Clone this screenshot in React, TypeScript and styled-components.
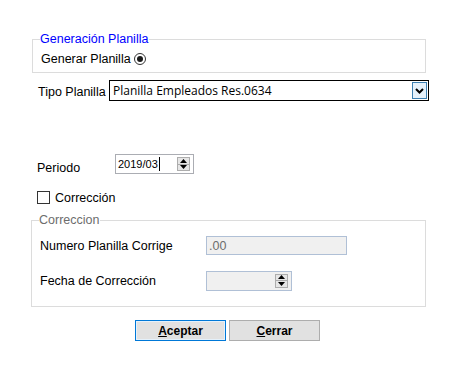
import { createGlobalStyle, styled } from "styled-components"

const GlobalStyle = createGlobalStyle`
    html, body {
        margin: 0;
        padding: 0;
        background: #ffffff;
    }
    * {
        box-sizing: border-box;
    }
`

const SpinButton = () => {
    return (
        <Spin>
            <SpinHalf>
                <svg width="7" height="4" viewBox="0 0 7 4">
                    <path d="M0 4 L3.5 0 L7 4 Z" fill="#000" />
                </svg>
            </SpinHalf>
            <SpinHalf>
                <svg width="7" height="4" viewBox="0 0 7 4">
                    <path d="M0 0 L3.5 4 L7 0 Z" fill="#000" />
                </svg>
            </SpinHalf>
        </Spin>
    )
}

const App = () => {
    return (
        <>
            <GlobalStyle />
            <Page>
                <GroupBox $left={32} $width={394}>
                    <GroupLegend $color="#0000ff">Generación Planilla</GroupLegend>
                    <GroupRow>
                        <Label>Generar Planilla</Label>
                        <Radio>
                            <RadioDot />
                        </Radio>
                    </GroupRow>
                </GroupBox>

                <TipoRow>
                    <Label>Tipo Planilla</Label>
                    <Combo>
                        <ComboText>Planilla Empleados Res.0634</ComboText>
                        <ComboButton>
                            <svg width="9" height="6" viewBox="0 0 9 6">
                                <path d="M1 1 L4.5 4.5 L8 1" stroke="#000" strokeWidth="2" fill="none" />
                            </svg>
                        </ComboButton>
                    </Combo>
                </TipoRow>

                <PeriodoRow>
                    <Label>Periodo</Label>
                    <SpinInput $width={79} $disabled={false}>
                        <InputText $color="#000">2019/03</InputText>
                        <Caret />
                        <SpinButton />
                    </SpinInput>
                </PeriodoRow>

                <CheckRow>
                    <CheckBox />
                    <Label>Corrección</Label>
                </CheckRow>

                <GroupBox $left={31} $width={395} $bottom={16}>
                    <GroupLegend $color="#6d6d6d">Correccion</GroupLegend>
                    <FieldRow>
                        <FieldLabel>Numero Planilla Corrige</FieldLabel>
                        <TextBox>
                            <InputText $color="#6d6d6d">.00</InputText>
                        </TextBox>
                    </FieldRow>
                    <FieldRow $top={16}>
                        <FieldLabel>Fecha de Corrección</FieldLabel>
                        <SpinInput $width={86} $disabled={true}>
                            <SpinButton />
                        </SpinInput>
                    </FieldRow>
                </GroupBox>

                <ButtonRow>
                    <Button $focused={true}><u>A</u>ceptar</Button>
                    <Button $focused={false}><u>C</u>errar</Button>
                </ButtonRow>
            </Page>
        </>
    )
}

export default App

const Page = styled.div`
    width: 457px;
    height: 376px;
    display: flex;
    flex-direction: column;
    background: #ffffff;
    font-family: "Liberation Sans", Arial, sans-serif;
    font-size: 12.5px;
    color: #000;
`

const GroupBox = styled.fieldset<{ $left: number, $width: number, $bottom?: number }>`
    margin: 0 0 0 ${props => props.$left}px;
    width: ${props => props.$width}px;
    border: 1px solid #dcdcdc;
    padding: 4px 8px ${props => props.$bottom ?? 4}px 8px;
    min-width: 0;

    &:first-child {
        margin-top: 32px;
    }
    &:not(:first-child) {
        margin-top: 9px;
    }
`

const GroupLegend = styled.legend<{ $color: string }>`
    color: ${props => props.$color};
    font-size: 12.5px;
    line-height: 14px;
    padding: 0 1px 0 0;
    margin-left: -1px;
`

const GroupRow = styled.div`
    display: flex;
    align-items: center;
    height: 18px;
`

const Label = styled.span`
    font-size: 12.5px;
    line-height: 14px;
    white-space: nowrap;
`

const Radio = styled.span`
    display: flex;
    align-items: center;
    justify-content: center;
    width: 12px;
    height: 12px;
    margin-left: 3px;
    border: 1px solid #333;
    border-radius: 50%;
    background: #fff;
`

const RadioDot = styled.span`
    width: 6px;
    height: 6px;
    border-radius: 50%;
    background: #1a1a1a;
`

const TipoRow = styled.div`
    display: flex;
    align-items: center;
    margin: 7px 0 0 38px;
    height: 21px;

    & > span {
        width: 71px;
        padding-top: 3px;
    }
`

const Combo = styled.div`
    display: flex;
    align-items: center;
    justify-content: space-between;
    width: 320px;
    height: 21px;
    border: 1px solid #000;
    box-shadow: inset 0 0 0 1px #fff;
    padding: 0 1px 0 3px;
    background: #fff;
`

const ComboText = styled.span`
    font-family: "Open Sans", "DejaVu Sans", sans-serif;
    font-size: 12px;
    line-height: 14px;
    padding-top: 1px;
`

const ComboButton = styled.span`
    display: flex;
    align-items: center;
    justify-content: center;
    width: 15px;
    height: 17px;
    background: #e5f1fb;
    border: 1px solid #3c7fb1;
`

const PeriodoRow = styled.div`
    display: flex;
    align-items: center;
    margin: 53px 0 0 37px;
    height: 20px;

    & > span:first-child {
        width: 78px;
        padding-top: 8px;
    }
`

const SpinInput = styled.div<{ $width: number, $disabled: boolean }>`
    display: flex;
    align-items: center;
    width: ${props => props.$width}px;
    height: 20px;
    border: 1px solid ${props => props.$disabled ? "#b0c0d6" : "#abadb3"};
    background: ${props => props.$disabled ? "#f0f0f0" : "#fff"};
    padding: 0 3px 0 2px;
`

const InputText = styled.span<{ $color: string }>`
    font-size: 11px;
    line-height: 13px;
    color: ${props => props.$color};
`

const Caret = styled.span`
    width: 1px;
    height: 14px;
    margin-left: 1px;
    background: #000;
`

const Spin = styled.span`
    display: flex;
    flex-direction: column;
    margin-left: auto;
    width: 13px;
    height: 14px;
    border: 1px solid #adadad;
    background: #e6e6e6;
`

const SpinHalf = styled.span`
    flex: 1;
    display: flex;
    align-items: center;
    justify-content: center;

    &:first-child {
        border-bottom: 1px solid #adadad;
    }
`

const CheckRow = styled.div`
    display: flex;
    align-items: center;
    margin: 17px 0 0 37px;
    height: 13px;
    gap: 5px;
`

const CheckBox = styled.span`
    width: 13px;
    height: 13px;
    border: 1px solid #333;
    background: #fff;
`

const FieldRow = styled.div<{ $top?: number }>`
    display: flex;
    align-items: center;
    height: 19px;
    margin-top: ${props => props.$top ?? 5}px;
`

const FieldLabel = styled.span`
    width: 166px;
    font-size: 12.5px;
    line-height: 14px;
`

const TextBox = styled.div`
    display: flex;
    align-items: center;
    width: 141px;
    height: 19px;
    border: 1px solid #b0c0d6;
    background: #f0f0f0;
    padding: 2px 3px 0 2px;

    & > span {
        font-size: 12.5px;
    }
`

const ButtonRow = styled.div`
    display: flex;
    justify-content: center;
    gap: 3px;
    margin-top: 13px;
    padding-right: 2px;
`

const Button = styled.button<{ $focused: boolean }>`
    width: 91px;
    height: 21px;
    padding: 0;
    font-family: "Liberation Sans", Arial, sans-serif;
    font-size: 12px;
    font-weight: bold;
    color: #000;
    background: #e1e1e1;
    border: 1px solid ${props => props.$focused ? "#0078d7" : "#adadad"};
    box-shadow: ${props => props.$focused ? "inset 0 0 0 1px #e5f1fb" : "none"};
    border-radius: 0;
`
